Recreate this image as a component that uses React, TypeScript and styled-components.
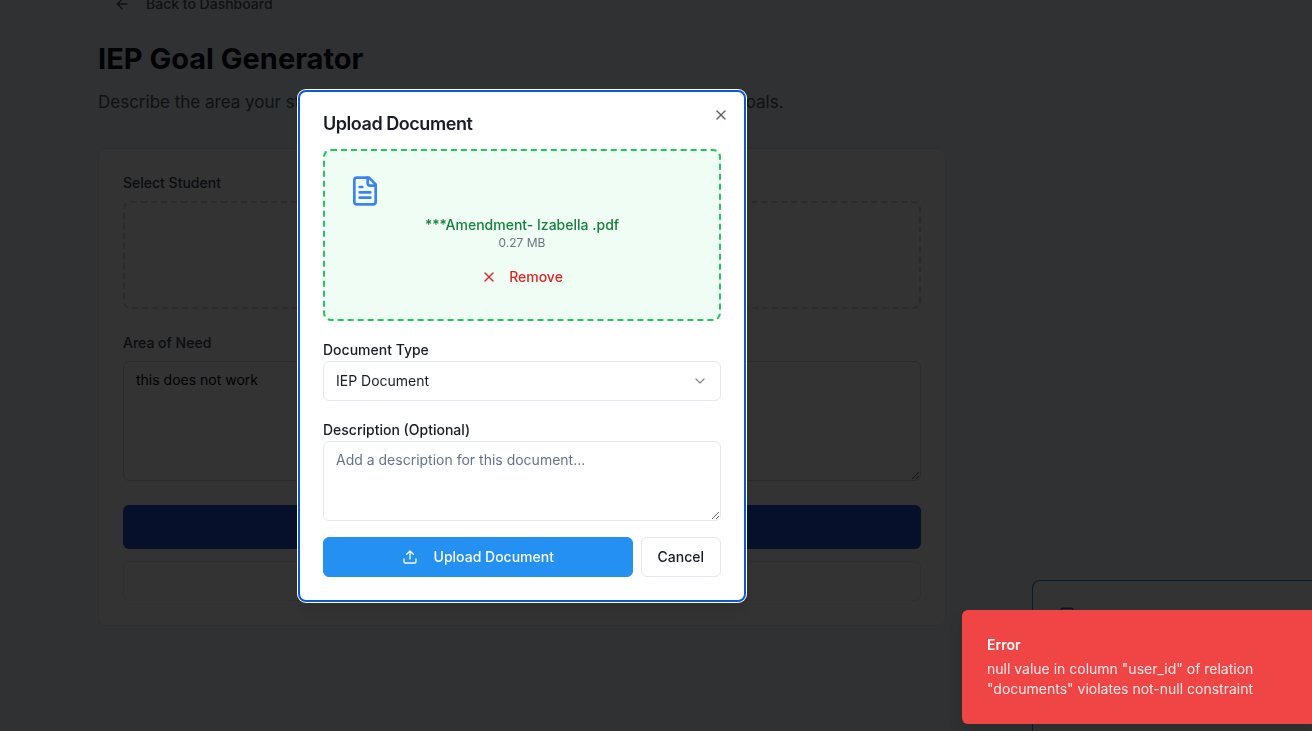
import React from "react";
import styled, { createGlobalStyle } from "styled-components";
import { ArrowLeft, ChevronDown, X } from "lucide-react";

const GlobalStyle = createGlobalStyle`
  *, *::before, *::after { box-sizing: border-box; }
  body {
    margin: 0;
    overflow: hidden;
    background: #eef4f8;
    color: #020817;
    font-family: Inter, "Liberation Sans", sans-serif;
    font-size: 14px;
    line-height: 20px;
  }
  h1, h2, p { margin: 0; }
  button, select, textarea { font: inherit; color: inherit; }
`;

const Page = styled.main`
  min-height: 100vh;
  margin-top: -16px;
  padding: 0 366px 0 98px;
  background: linear-gradient(#eff3f8, #edf3f7);
`;

const BackButton = styled.button`
  display: flex;
  align-items: center;
  gap: 16px;
  height: 40px;
  margin-bottom: 16px;
  padding: 0 16px;
  border: 0;
  background: none;
  font-weight: 500;
  color: #4b5563;
`;

const PageTitle = styled.h1`
  margin-bottom: 10px;
  font-size: 29px;
  line-height: 38px;
  font-weight: 700;
  color: #0b1120;
`;

const Lead = styled.p`
  margin-bottom: 32px;
  font-size: 17px;
  line-height: 28px;
  color: #4b5563;
`;

const Card = styled.section`
  display: flex;
  flex-direction: column;
  gap: 24px;
  padding: 24px;
  border: 1px solid #dbe5ee;
  border-radius: 8px;
  background: #fff;
`;

const Field = styled.div<{ $gap?: number }>`
  display: flex;
  flex-direction: column;
  gap: ${(p) => p.$gap ?? 0}px;
`;

const CardLabel = styled.label`
  font-weight: 500;
  color: #374151;
`;

const StudentSlot = styled.div`
  height: 108px;
  border: 2px dashed #d1d5db;
  border-radius: 8px;
`;

const TextArea = styled.textarea<{ $height: number; $border: string }>`
  display: block;
  width: 100%;
  height: ${(p) => p.$height}px;
  padding: 8px 12px;
  border: 1px solid ${(p) => p.$border};
  border-radius: 6px;
  background: #fff;
  outline: none;
  resize: vertical;
  &::placeholder { color: #64748b; opacity: 1; }
`;

const CardActions = styled.div`
  display: flex;
  flex-direction: column;
  gap: 12px;
`;

const GenerateButton = styled.button`
  height: 44px;
  border: 0;
  border-radius: 6px;
  background: #2251d6;
`;

const SecondaryButton = styled.button`
  height: 40px;
  border: 1px solid #e2e8f0;
  border-radius: 6px;
  background: #fff;
`;

const Assistant = styled.aside`
  position: fixed;
  right: 0;
  bottom: 0;
  width: 280px;
  height: 151px;
  padding: 24px;
  border: solid #1a8fe3;
  border-width: 1px 0 0 1px;
  border-radius: 8px 0 0 0;
  background: #fff;
  color: #1a80d0;
`;

const Overlay = styled.div`
  position: fixed;
  inset: 0;
  display: flex;
  align-items: center;
  justify-content: center;
  padding: 0 268px 39px 0;
  background: rgba(0, 0, 0, 0.8);
`;

const Dialog = styled.div`
  position: relative;
  display: flex;
  flex-direction: column;
  gap: 16px;
  width: 100%;
  max-width: 448px;
  padding: 23px;
  border: 2px solid #0a5bd0;
  border-radius: 8px;
  background: #fff;
  color: #171c28;
  box-shadow: 0 0 0 1px #fff, 0 10px 15px rgba(0, 0, 0, 0.1);
`;

const DialogTitle = styled.h2`
  font-size: 18px;
  line-height: 18px;
  font-weight: 600;
  letter-spacing: -0.025em;
`;

const CloseButton = styled.button`
  position: absolute;
  top: 15px;
  right: 15px;
  display: flex;
  padding: 0;
  border: 0;
  background: none;
  opacity: 0.7;
`;

const DropZone = styled.div`
  padding: 24px;
  border: 2px dashed #22c55e;
  border-radius: 8px;
  background: #f0fdf4;
  text-align: center;
`;

const FileGlyph = styled.svg`
  display: block;
  margin-bottom: 8px;
  color: #3b82f6;
`;

const FileName = styled.p`
  font-weight: 500;
  color: #15803d;
`;

const FileSize = styled.p`
  margin-bottom: 8px;
  font-size: 12px;
  line-height: 16px;
  color: #6b7280;
`;

const RemoveButton = styled.button`
  display: inline-flex;
  align-items: center;
  gap: 12px;
  height: 36px;
  padding: 0 12px;
  border: 0;
  background: none;
  font-weight: 500;
  color: #dc2626;
  vertical-align: top;
`;

const DialogLabel = styled.label`
  padding-top: 2px;
  line-height: 22px;
  font-weight: 500;
`;

const SelectBox = styled.div`
  display: grid;
  align-items: center;
  > * { grid-area: 1 / 1; }
  > svg {
    justify-self: end;
    margin-right: 13px;
    opacity: 0.5;
    pointer-events: none;
  }
`;

const Select = styled.select`
  appearance: none;
  width: 100%;
  height: 40px;
  padding: 0 12px;
  border: 1px solid #e2e8f0;
  border-radius: 6px;
  background: #fff;
`;

const DialogActions = styled.div`
  display: flex;
  gap: 8px;
`;

const DialogButton = styled.button<{ $primary?: boolean }>`
  display: flex;
  flex: ${(p) => (p.$primary ? "1" : "none")};
  align-items: center;
  justify-content: center;
  gap: 16px;
  height: 40px;
  padding: 0 16px;
  border: 1px solid ${(p) => (p.$primary ? "#2490f2" : "#e2e8f0")};
  border-radius: 6px;
  background: ${(p) => (p.$primary ? "#2490f2" : "#fff")};
  color: ${(p) => (p.$primary ? "#f8fafc" : "inherit")};
  font-weight: 500;
`;

const Toast = styled.div`
  position: fixed;
  right: 0;
  bottom: 7px;
  width: 350px;
  padding: 25px;
  border-radius: 6px 0 0 6px;
  background: #f04545;
  color: #f8fafc;
  box-shadow: 0 10px 15px rgba(0, 0, 0, 0.1);
`;

const ToastTitle = styled.p`
  margin-bottom: 4px;
  font-weight: 600;
`;

const ToastText = styled.p`
  opacity: 0.9;
`;

const stroke = {
  viewBox: "0 0 24 24",
  fill: "none",
  stroke: "currentColor",
  strokeWidth: 2,
  strokeLinecap: "round" as const,
  strokeLinejoin: "round" as const,
};

const FileTextIcon = () => (
  <FileGlyph width="32" height="32" {...stroke}>
    <path d="M15 2H6a2 2 0 0 0-2 2v16a2 2 0 0 0 2 2h12a2 2 0 0 0 2-2V7Z" />
    <path d="M14 2v4a2 2 0 0 0 2 2h4" />
    <path d="M10 9H8M16 13H8M16 17H8" />
  </FileGlyph>
);

const UploadIcon = () => (
  <svg width="16" height="16" {...stroke}>
    <path d="M21 15v4a2 2 0 0 1-2 2H5a2 2 0 0 1-2-2v-4" />
    <path d="M17 8l-5-5-5 5M12 3v12" />
  </svg>
);

const BoxIcon = () => (
  <svg width="20" height="20" {...stroke}>
    <rect x="5" y="4" width="14" height="17" rx="2" />
  </svg>
);

export default function App() {
  return (
    <>
      <GlobalStyle />
      <Page>
        <BackButton type="button">
          <ArrowLeft size={16} />
          Back to Dashboard
        </BackButton>
        <PageTitle>IEP Goal Generator</PageTitle>
        <Lead>Describe the area your student needs support with to generate customized IEP goals.</Lead>
        <Card>
          <Field $gap={8}>
            <CardLabel as="span">Select Student</CardLabel>
            <StudentSlot />
          </Field>
          <Field $gap={8}>
            <CardLabel htmlFor="need">Area of Need</CardLabel>
            <TextArea id="need" $height={120} $border="#d1d5db" defaultValue="this does not work" />
          </Field>
          <CardActions>
            <GenerateButton type="button" aria-label="Generate goals" />
            <SecondaryButton type="button" aria-label="Upload a document" />
          </CardActions>
        </Card>
      </Page>
      <Assistant>
        <BoxIcon />
      </Assistant>
      <Overlay>
        <Dialog role="dialog" aria-modal="true" aria-labelledby="dialog-title">
          <DialogTitle id="dialog-title">Upload Document</DialogTitle>
          <DropZone>
            <FileTextIcon />
            <FileName>***Amendment- Izabella .pdf</FileName>
            <FileSize>0.27 MB</FileSize>
            <RemoveButton type="button">
              <X size={16} />
              Remove
            </RemoveButton>
          </DropZone>
          <Field>
            <DialogLabel htmlFor="doc-type">Document Type</DialogLabel>
            <SelectBox>
              <Select id="doc-type" defaultValue="iep">
                <option value="iep">IEP Document</option>
              </Select>
              <ChevronDown size={16} />
            </SelectBox>
          </Field>
          <Field>
            <DialogLabel htmlFor="description">Description (Optional)</DialogLabel>
            <TextArea
              id="description"
              $height={80}
              $border="#e2e8f0"
              placeholder="Add a description for this document..."
            />
          </Field>
          <DialogActions>
            <DialogButton type="button" $primary>
              <UploadIcon />
              Upload Document
            </DialogButton>
            <DialogButton type="button">Cancel</DialogButton>
          </DialogActions>
          <CloseButton type="button" aria-label="Close">
            <X size={16} />
          </CloseButton>
        </Dialog>
      </Overlay>
      <Toast role="alert">
        <ToastTitle>Error</ToastTitle>
        <ToastText>null value in column "user_id" of relation "documents" violates not-null constraint</ToastText>
      </Toast>
    </>
  );
}
